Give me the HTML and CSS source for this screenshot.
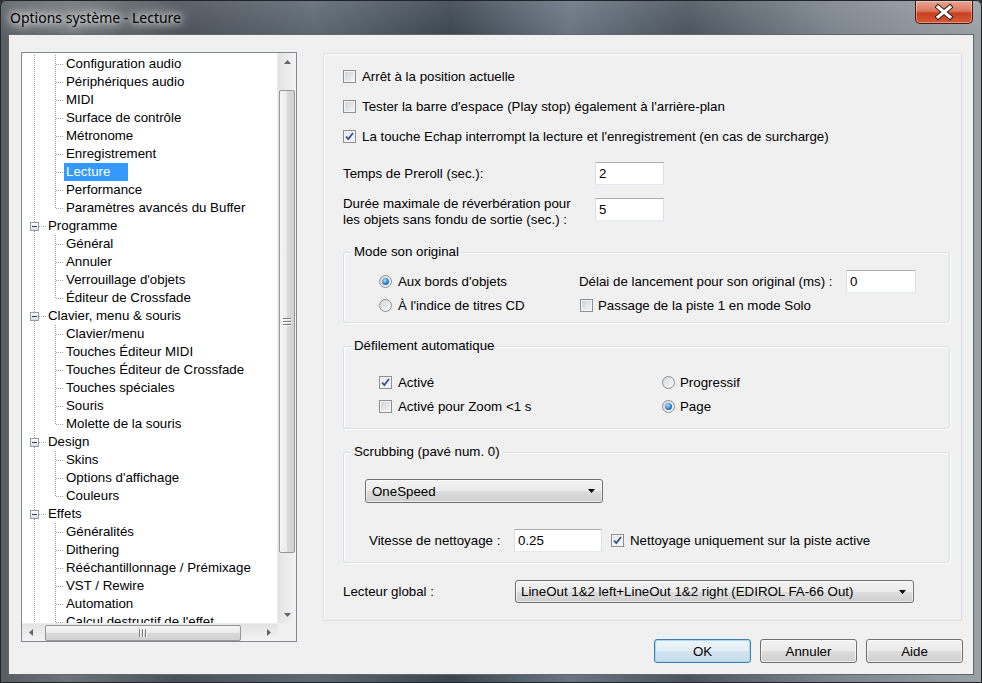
FILE: index.html
```html
<!DOCTYPE html>
<html>
<head>
  <title>Options système - Lecture</title>
  <meta charset="utf-8">
  <link rel="stylesheet" href="styles.css">
</head>
<body>
  <div class="window">
    <div class="titlebar">
      <span class="title">Options système - Lecture</span>
      <span class="close-button">
        <svg width="56" height="21" viewBox="0 0 56 21">
          <path d="M22 6 L34 16 M34 6 L22 16" stroke="#3b2219" stroke-width="5" stroke-linecap="square"/>
          <path d="M22 6 L34 16 M34 6 L22 16" stroke="#fff" stroke-width="3" stroke-linecap="square"/>
        </svg>
      </span>
    </div>

    <div class="client">
      <div class="tree">
        <div class="tree-top">
          <div class="tree-list">
            <div class="row leaf"><span class="l0"></span><span class="l1"></span><span class="label">Configuration audio</span></div>
            <div class="row leaf"><span class="l0"></span><span class="l1"></span><span class="label">Périphériques audio</span></div>
            <div class="row leaf"><span class="l0"></span><span class="l1"></span><span class="label">MIDI</span></div>
            <div class="row leaf"><span class="l0"></span><span class="l1"></span><span class="label">Surface de contrôle</span></div>
            <div class="row leaf"><span class="l0"></span><span class="l1"></span><span class="label">Métronome</span></div>
            <div class="row leaf"><span class="l0"></span><span class="l1"></span><span class="label">Enregistrement</span></div>
            <div class="row leaf"><span class="l0"></span><span class="l1"></span><span class="label sel">Lecture</span></div>
            <div class="row leaf"><span class="l0"></span><span class="l1"></span><span class="label">Performance</span></div>
            <div class="row leaf last"><span class="l0"></span><span class="l1"></span><span class="label">Paramètres avancés du Buffer</span></div>

            <div class="row node"><span class="l0"><span class="box"></span></span><span class="label">Programme</span></div>
            <div class="row leaf"><span class="l0"></span><span class="l1"></span><span class="label">Général</span></div>
            <div class="row leaf"><span class="l0"></span><span class="l1"></span><span class="label">Annuler</span></div>
            <div class="row leaf"><span class="l0"></span><span class="l1"></span><span class="label">Verrouillage d'objets</span></div>
            <div class="row leaf last"><span class="l0"></span><span class="l1"></span><span class="label">Éditeur de Crossfade</span></div>

            <div class="row node"><span class="l0"><span class="box"></span></span><span class="label">Clavier, menu &amp; souris</span></div>
            <div class="row leaf"><span class="l0"></span><span class="l1"></span><span class="label">Clavier/menu</span></div>
            <div class="row leaf"><span class="l0"></span><span class="l1"></span><span class="label">Touches Éditeur MIDI</span></div>
            <div class="row leaf"><span class="l0"></span><span class="l1"></span><span class="label">Touches Éditeur de Crossfade</span></div>
            <div class="row leaf"><span class="l0"></span><span class="l1"></span><span class="label">Touches spéciales</span></div>
            <div class="row leaf"><span class="l0"></span><span class="l1"></span><span class="label">Souris</span></div>
            <div class="row leaf last"><span class="l0"></span><span class="l1"></span><span class="label">Molette de la souris</span></div>

            <div class="row node"><span class="l0"><span class="box"></span></span><span class="label">Design</span></div>
            <div class="row leaf"><span class="l0"></span><span class="l1"></span><span class="label">Skins</span></div>
            <div class="row leaf"><span class="l0"></span><span class="l1"></span><span class="label">Options d'affichage</span></div>
            <div class="row leaf last"><span class="l0"></span><span class="l1"></span><span class="label">Couleurs</span></div>

            <div class="row node"><span class="l0"><span class="box"></span></span><span class="label">Effets</span></div>
            <div class="row leaf"><span class="l0"></span><span class="l1"></span><span class="label">Généralités</span></div>
            <div class="row leaf"><span class="l0"></span><span class="l1"></span><span class="label">Dithering</span></div>
            <div class="row leaf"><span class="l0"></span><span class="l1"></span><span class="label">Rééchantillonnage / Prémixage</span></div>
            <div class="row leaf"><span class="l0"></span><span class="l1"></span><span class="label">VST / Rewire</span></div>
            <div class="row leaf"><span class="l0"></span><span class="l1"></span><span class="label">Automation</span></div>
            <div class="row leaf"><span class="l0"></span><span class="l1"></span><span class="label">Calcul destructif de l'effet</span></div>
          </div>

          <div class="vscroll">
            <span class="arrow"><svg width="7" height="4" viewBox="0 0 7 4"><polygon points="0,4 3.5,0 7,4" fill="#5f6368"/></svg></span>
            <span class="track vtrack"><span class="thumb vthumb"><span class="grip vgrip"></span></span></span>
            <span class="arrow"><svg width="7" height="4" viewBox="0 0 7 4"><polygon points="0,0 3.5,4 7,0" fill="#5f6368"/></svg></span>
          </div>
        </div>

        <div class="hscroll-row">
          <div class="hscroll">
            <span class="arrow"><svg width="4" height="7" viewBox="0 0 4 7"><polygon points="4,0 0,3.5 4,7" fill="#5f6368"/></svg></span>
            <span class="track htrack"><span class="thumb hthumb"><span class="grip hgrip"></span></span></span>
            <span class="arrow"><svg width="4" height="7" viewBox="0 0 4 7"><polygon points="0,0 4,3.5 0,7" fill="#5f6368"/></svg></span>
          </div>
          <div class="corner"></div>
        </div>
      </div>

      <div class="main">
        <div class="panel">
          <div class="option"><span class="check"></span>Arrêt à la position actuelle</div>
          <div class="option"><span class="check"></span>Tester la barre d'espace (Play stop) également à l'arrière-plan</div>
          <div class="option"><span class="check on"><svg width="11" height="11" viewBox="0 0 11 11"><path d="M2 5.5 L4.3 8 L9 2" fill="none" stroke="#33518f" stroke-width="1.8"/></svg></span>La touche Echap interrompt la lecture et l'enregistrement (en cas de surcharge)</div>

          <div class="field-row preroll">
            <span class="field-label">Temps de Preroll (sec.):</span>
            <span class="textbox short">2</span>
          </div>
          <div class="field-row reverb">
            <span class="field-label">Durée maximale de réverbération pour<br>les objets sans fondu de sortie (sec.) :</span>
            <span class="textbox short">5</span>
          </div>

          <fieldset class="group mode-group">
            <legend>Mode son original</legend>
            <div class="group-body mode-grid">
              <div class="option-inline"><span class="radio on"><span class="dot"></span></span>Aux bords d'objets</div>
              <div class="delay-row">
                <span class="delay-label">Délai de lancement pour son original (ms) :</span>
                <span class="textbox delay">0</span>
              </div>
              <div class="option-inline"><span class="radio"></span>À l'indice de titres CD</div>
              <div class="option-inline solo"><span class="check"></span>Passage de la piste 1 en mode Solo</div>
            </div>
          </fieldset>

          <fieldset class="group scroll-group">
            <legend>Défilement automatique</legend>
            <div class="group-body scroll-grid">
              <div class="option-inline"><span class="check on"><svg width="11" height="11" viewBox="0 0 11 11"><path d="M2 5.5 L4.3 8 L9 2" fill="none" stroke="#33518f" stroke-width="1.8"/></svg></span>Activé</div>
              <div class="option-inline tight"><span class="radio"></span>Progressif</div>
              <div class="option-inline"><span class="check"></span>Activé pour Zoom &lt;1 s</div>
              <div class="option-inline tight"><span class="radio on"><span class="dot"></span></span>Page</div>
            </div>
          </fieldset>

          <fieldset class="group scrub-group">
            <legend>Scrubbing (pavé num. 0)</legend>
            <div class="group-body scrub-body">
              <div class="combo speed-combo"><span>OneSpeed</span><svg width="7" height="4" viewBox="0 0 7 4"><polygon points="0,0 3.5,4 7,0" fill="#000"/></svg></div>
              <div class="speed-row">
                <span class="speed-label">Vitesse de nettoyage :</span>
                <span class="textbox speed">0.25</span>
                <div class="option-inline clean"><span class="check on"><svg width="11" height="11" viewBox="0 0 11 11"><path d="M2 5.5 L4.3 8 L9 2" fill="none" stroke="#33518f" stroke-width="1.8"/></svg></span>Nettoyage uniquement sur la piste active</div>
              </div>
            </div>
          </fieldset>

          <div class="player-row">
            <span class="player-label">Lecteur global :</span>
            <div class="combo player-combo"><span>LineOut 1&amp;2 left+LineOut 1&amp;2 right (EDIROL FA-66 Out)</span><svg width="7" height="4" viewBox="0 0 7 4"><polygon points="0,0 3.5,4 7,0" fill="#000"/></svg></div>
          </div>
        </div>

        <div class="buttons">
          <button class="dlg-button default">OK</button>
          <button class="dlg-button">Annuler</button>
          <button class="dlg-button">Aide</button>
        </div>
      </div>
    </div>
  </div>
</body>
</html>
```

FILE: styles.css
```css
body {
  margin: 0;
  font-family: "Liberation Sans", Arial, sans-serif;
  font-size: 13.3px;
  color: #000;
  background: #2b3138;
}
.window {
  width: 982px;
  height: 683px;
  box-sizing: border-box;
  padding: 0 8px 8px;
  background:
    linear-gradient(to bottom, rgba(255, 255, 255, 0.1), rgba(255, 255, 255, 0) 34px),
    linear-gradient(90deg, #575d63 0%, #6d7379 7%, #4a5158 18%, #5d6872 32%, #3c4650 46%, #687582 58%, #4c555e 70%, #7a838b 84%, #9ba1a6 100%);
  box-shadow: inset 0 0 0 1px #1e252b;
  border-radius: 6px 6px 0 0;
}

/* title bar */
.titlebar {
  display: flex;
  justify-content: space-between;
  align-items: flex-start;
  height: 34px;
}
.title {
  padding: 8px 0 0 2px;
  font-family: "Noto Sans", sans-serif;
  font-size: 14px;
  line-height: 20px;
  color: #000;
  text-shadow: 0 0 6px #fff, 0 0 12px #fff, 0 0 18px rgba(255, 255, 255, 0.9);
}
.close-button {
  width: 58px;
  height: 23px;
  margin: 1px 1px 0 0;
  box-sizing: border-box;
  border: 1px solid #4a1a10;
  border-top: none;
  border-radius: 0 0 5px 5px;
  background: linear-gradient(#e9a595 0%, #dc7a62 45%, #c8401f 55%, #d65a3a 100%);
  box-shadow: inset 0 0 0 1px rgba(255, 255, 255, 0.35);
}
.close-button svg {
  display: block;
}

/* client area */
.client {
  display: flex;
  gap: 26px;
  height: 641px;
  box-sizing: border-box;
  padding: 17px 11px 0 12px;
  background: #f0f0f0;
  border: 1px solid #5f6870;
}

/* tree */
.tree {
  display: flex;
  flex-direction: column;
  flex: none;
  width: 276px;
  height: 590px;
  box-sizing: border-box;
  border: 1px solid #828790;
  background: #fff;
}
.tree-top {
  display: flex;
  flex: 1;
  min-height: 0;
}
.tree-list {
  flex: 1;
  overflow: hidden;
  padding-top: 2px;
}
.row {
  display: flex;
  height: 18px;
  line-height: 18px;
  white-space: nowrap;
}
.l0 {
  flex: none;
  width: 22px;
  background: repeating-linear-gradient(to bottom, #a0a0a0 0 1px, transparent 1px 2px) 12px 0 / 1px 100% no-repeat;
}
.node .l0 {
  display: flex;
  align-items: center;
  width: 25px;
  padding-left: 8px;
  box-sizing: border-box;
  background:
    repeating-linear-gradient(to right, #a0a0a0 0 1px, transparent 1px 2px) 17px 9px / 8px 1px no-repeat,
    repeating-linear-gradient(to bottom, #a0a0a0 0 1px, transparent 1px 2px) 12px 0 / 1px 100% no-repeat;
}
.box {
  width: 9px;
  height: 9px;
  box-sizing: border-box;
  border: 1px solid #919aa5;
  background:
    linear-gradient(#2f3a48, #2f3a48) center / 5px 1px no-repeat,
    linear-gradient(#fdfdfd, #d9dde2);
}
.l1 {
  flex: none;
  width: 20px;
  background:
    repeating-linear-gradient(to right, #a0a0a0 0 1px, transparent 1px 2px) 12px 9px / 8px 1px no-repeat,
    repeating-linear-gradient(to bottom, #a0a0a0 0 1px, transparent 1px 2px) 11px 0 / 1px 100% no-repeat;
}
.last .l1 {
  background:
    repeating-linear-gradient(to right, #a0a0a0 0 1px, transparent 1px 2px) 12px 9px / 8px 1px no-repeat,
    repeating-linear-gradient(to bottom, #a0a0a0 0 1px, transparent 1px 2px) 11px 0 / 1px 10px no-repeat;
}
.label {
  padding: 0 2px;
}
.node .label {
  padding-left: 1px;
}
.label.sel {
  padding-right: 18px;
  background: #3399ff;
  color: #fff;
}

/* scrollbars */
.vscroll {
  display: flex;
  flex-direction: column;
  flex: none;
  width: 18px;
  background: linear-gradient(to right, #e3e3e3, #f3f3f3);
  border-left: 1px solid #ececec;
}
.arrow {
  display: flex;
  align-items: center;
  justify-content: center;
  flex: none;
  width: 18px;
  height: 17px;
}
.arrow svg {
  display: block;
}
.track {
  display: flex;
  flex: 1;
}
.vtrack {
  flex-direction: column;
  padding-top: 20px;
  padding-left: 1px;
}
.thumb {
  display: flex;
  align-items: center;
  justify-content: center;
  box-sizing: border-box;
  border: 1px solid #979797;
  border-radius: 2px;
}
.vthumb {
  width: 16px;
  height: 463px;
  background: linear-gradient(to right, #f5f5f5 0%, #ebebeb 50%, #d9d9d9 51%, #d2d2d2 100%);
}
.grip {
  display: block;
}
.vgrip {
  width: 8px;
  height: 8px;
  background: repeating-linear-gradient(to bottom, #7a7a7a 0 1px, #fafafa 1px 2px, transparent 2px 3px);
}
.hscroll-row {
  display: flex;
  flex: none;
  height: 18px;
}
.hscroll {
  display: flex;
  flex: 1;
  background: linear-gradient(#e3e3e3, #f3f3f3);
  border-top: 1px solid #ececec;
}
.hscroll .arrow {
  height: auto;
}
.htrack {
  align-items: stretch;
  padding: 1px 0 0 5px;
}
.hthumb {
  width: 196px;
  background: linear-gradient(#f5f5f5 0%, #ebebeb 50%, #d9d9d9 51%, #d2d2d2 100%);
}
.hgrip {
  width: 8px;
  height: 8px;
  background: repeating-linear-gradient(to right, #7a7a7a 0 1px, #fafafa 1px 2px, transparent 2px 3px);
}
.corner {
  flex: none;
  width: 18px;
  background: #f0f0f0;
}

/* right side */
.main {
  display: flex;
  flex-direction: column;
  flex: 1;
  padding-top: 1px;
}
.panel {
  height: 568px;
  box-sizing: border-box;
  padding: 13px 0 0 19px;
  border: 1px solid #d5dfe5;
  box-shadow: inset 1px 1px #fff;
  background: #f0f0f0;
}
.option {
  display: flex;
  align-items: center;
  gap: 6px;
  height: 18px;
  margin-bottom: 12px;
}
.check {
  display: flex;
  align-items: center;
  justify-content: center;
  flex: none;
  width: 13px;
  height: 13px;
  box-sizing: border-box;
  border: 1px solid #8e8f8f;
  background: linear-gradient(135deg, #cdd1d6 0%, #f7f7f7 100%);
  box-shadow: inset 0 0 0 1px #f4f4f4;
}
.check.on {
  background: linear-gradient(135deg, #e4e6ea 0%, #fbfbfb 100%);
}
.check svg {
  display: block;
}
.radio {
  display: flex;
  align-items: center;
  justify-content: center;
  flex: none;
  width: 13px;
  height: 13px;
  box-sizing: border-box;
  border: 1px solid #8e8f8f;
  border-radius: 50%;
  background: linear-gradient(135deg, #d3d6da 0%, #fbfbfb 100%);
}
.radio .dot {
  width: 7px;
  height: 7px;
  border-radius: 50%;
  background: radial-gradient(circle at 40% 35%, #a6e4fb 0%, #2d7fcf 55%, #0d4d96 100%);
}
.field-row {
  display: flex;
  align-items: center;
}
.field-label {
  width: 252px;
  flex: none;
  line-height: 16px;
}
.preroll {
  margin-top: 17px;
}
.reverb {
  align-items: flex-start;
  margin-top: 11px;
}
.reverb .textbox {
  margin-top: 2px;
}
.textbox {
  display: flex;
  align-items: center;
  flex: none;
  height: 23px;
  box-sizing: border-box;
  padding-left: 3px;
  background: #fff;
  border: 1px solid #e3e9ef;
  border-top-color: #abadb3;
  border-left-color: #dbdfe6;
  border-right-color: #dbdfe6;
}
.short {
  width: 69px;
}

/* group boxes */
.group {
  margin: 16px 11px 0 0;
  padding: 0;
  min-width: 0;
  border: 1px solid #d5dfe5;
  border-radius: 3px;
  box-shadow: inset 1px 1px #fff, 1px 1px #fff;
}
.scroll-group {
  margin-top: 15px;
}
.scrub-group {
  margin-top: 15px;
}
.group legend {
  margin-left: 8px;
  padding: 0 2px;
  line-height: 16px;
  background: #f0f0f0;
}
.option-inline {
  display: flex;
  align-items: center;
  gap: 6px;
}
.option-inline.tight {
  gap: 5px;
}
.mode-grid {
  display: grid;
  grid-template-columns: 200px 1fr;
  grid-auto-rows: 24px;
  padding: 9px 0 5px 35px;
}
.delay-row {
  display: flex;
  align-items: center;
}
.delay-label {
  width: 267px;
  flex: none;
}
.delay {
  width: 70px;
}
.solo {
  gap: 5px;
  padding-left: 1px;
}
.scroll-grid {
  display: grid;
  grid-template-columns: 283px 1fr;
  grid-auto-rows: 20px;
  row-gap: 4px;
  padding: 18px 0 12px 35px;
}
.scrub-body {
  padding: 19px 0 10px 21px;
}
.combo {
  display: flex;
  align-items: center;
  justify-content: space-between;
  height: 24px;
  box-sizing: border-box;
  padding: 0 7px 0 6px;
  border: 1px solid #707070;
  border-radius: 3px;
  background: linear-gradient(#f2f2f2 0%, #ebebeb 50%, #dddddd 51%, #cfcfcf 100%);
  box-shadow: inset 0 0 0 1px rgba(255, 255, 255, 0.6);
}
.combo svg {
  display: block;
}
.speed-combo {
  width: 238px;
}
.speed-row {
  display: flex;
  align-items: center;
  margin-top: 26px;
  padding-left: 4px;
}
.speed-label {
  width: 145px;
  flex: none;
}
.speed {
  width: 88px;
}
.clean {
  margin-left: 9px;
}
.player-row {
  display: flex;
  align-items: center;
  margin-top: 17px;
}
.player-label {
  width: 172px;
  flex: none;
}
.player-combo {
  width: 399px;
  height: 23px;
  padding-left: 5px;
}

/* dialog buttons */
.buttons {
  display: flex;
  justify-content: flex-end;
  gap: 9px;
  margin: 18px -1px 0 0;
}
.dlg-button {
  width: 97px;
  height: 24px;
  padding: 0;
  font-family: "Liberation Sans", Arial, sans-serif;
  font-size: 13.3px;
  color: #000;
  border: 1px solid #707070;
  border-radius: 3px;
  background: linear-gradient(#f2f2f2 0%, #ebebeb 50%, #dddddd 51%, #cfcfcf 100%);
  box-shadow: inset 0 0 0 1px rgba(255, 255, 255, 0.7);
}
.dlg-button.default {
  border-color: #3c7fb1;
  background: linear-gradient(#eef5fa 0%, #e3eef6 50%, #d3e3ef 51%, #c7dbea 100%);
  box-shadow: inset 0 0 0 1px #a8d8f6;
}
```
